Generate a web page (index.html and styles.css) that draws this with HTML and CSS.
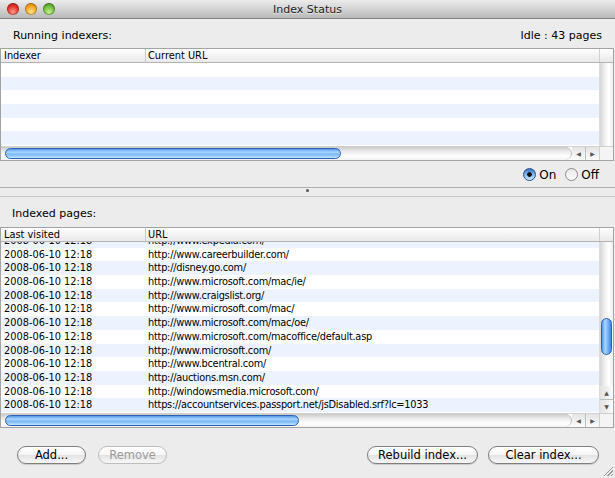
FILE: index.html
```html
<!DOCTYPE html>
<html lang="en">
<head>
  <meta charset="UTF-8" />
  <title>Index Status</title>
  <link rel="stylesheet" href="styles.css">
</head>
<body>
  <div class="window">
    <div class="titlebar">
      <div class="lights">
        <span class="light red"></span>
        <span class="light amber"></span>
        <span class="light green"></span>
      </div>
      <div class="title">Index Status</div>
    </div>

    <div class="label-row">
      <span>Running indexers:</span>
      <span>Idle : 43 pages</span>
    </div>

    <div class="table">
      <div class="thead">
        <div class="col-a">Indexer</div>
        <div class="col-b">Current URL</div>
        <div class="col-end"></div>
      </div>
      <div class="tbody top-body">
        <div class="rows">
          <div class="row"></div>
          <div class="row"></div>
          <div class="row"></div>
          <div class="row"></div>
          <div class="row"></div>
          <div class="row"></div>
        </div>
        <div class="vscroll empty"></div>
      </div>
      <div class="hscroll">
        <div class="htrack"><div class="hthumb thumb-top"></div></div>
        <div class="arrows">
          <span class="arrow">&#9664;</span><span class="arrow">&#9654;</span>
        </div>
        <div class="corner"></div>
      </div>
    </div>

    <div class="radio-row">
      <label class="radio-item"><span class="radio on"></span>On</label>
      <label class="radio-item"><span class="radio"></span>Off</label>
    </div>

    <div class="splitter"><span class="dimple"></span></div>

    <div class="label-row second">
      <span>Indexed pages:</span>
    </div>

    <div class="table">
      <div class="thead">
        <div class="col-a">Last visited</div>
        <div class="col-b">URL</div>
        <div class="col-end"></div>
      </div>
      <div class="tbody bottom-body">
        <div class="rows">
          <div class="scrolled">
            <div class="row"><span class="col-a">2008-06-10 12:18</span><span class="col-b">http://www.expedia.com/</span></div>
            <div class="row"><span class="col-a">2008-06-10 12:18</span><span class="col-b">http://www.careerbuilder.com/</span></div>
            <div class="row"><span class="col-a">2008-06-10 12:18</span><span class="col-b">http://disney.go.com/</span></div>
            <div class="row"><span class="col-a">2008-06-10 12:18</span><span class="col-b">http://www.microsoft.com/mac/ie/</span></div>
            <div class="row"><span class="col-a">2008-06-10 12:18</span><span class="col-b">http://www.craigslist.org/</span></div>
            <div class="row"><span class="col-a">2008-06-10 12:18</span><span class="col-b">http://www.microsoft.com/mac/</span></div>
            <div class="row"><span class="col-a">2008-06-10 12:18</span><span class="col-b">http://www.microsoft.com/mac/oe/</span></div>
            <div class="row"><span class="col-a">2008-06-10 12:18</span><span class="col-b">http://www.microsoft.com/macoffice/default.asp</span></div>
            <div class="row"><span class="col-a">2008-06-10 12:18</span><span class="col-b">http://www.microsoft.com/</span></div>
            <div class="row"><span class="col-a">2008-06-10 12:18</span><span class="col-b">http://www.bcentral.com/</span></div>
            <div class="row"><span class="col-a">2008-06-10 12:18</span><span class="col-b">http://auctions.msn.com/</span></div>
            <div class="row"><span class="col-a">2008-06-10 12:18</span><span class="col-b">http://windowsmedia.microsoft.com/</span></div>
            <div class="row"><span class="col-a">2008-06-10 12:18</span><span class="col-b">https://accountservices.passport.net/jsDisabled.srf?lc=1033</span></div>
            <div class="row"><span class="col-a">2008-06-10 12:18</span><span class="col-b">http://www.msn.com/</span></div>
          </div>
        </div>
        <div class="vscroll">
          <div class="vtrack"><div class="vthumb"></div></div>
          <div class="varrows">
            <span class="arrow">&#9650;</span><span class="arrow">&#9660;</span>
          </div>
        </div>
      </div>
      <div class="hscroll">
        <div class="htrack"><div class="hthumb thumb-bottom"></div></div>
        <div class="arrows">
          <span class="arrow">&#9664;</span><span class="arrow">&#9654;</span>
        </div>
        <div class="corner"></div>
      </div>
    </div>

    <div class="buttons">
      <div class="group">
        <button class="btn small">Add...</button>
        <button class="btn small" disabled>Remove</button>
      </div>
      <div class="group">
        <button class="btn wide">Rebuild index...</button>
        <button class="btn wide">Clear index...</button>
      </div>
    </div>

    <div class="grip"></div>
  </div>
</body>
</html>
```

FILE: styles.css
```css
body {
  margin: 0;
  background: #ececec;
  font-family: "DejaVu Sans", "Liberation Sans", sans-serif;
  color: #000;
}
.window {
  position: relative;
  width: 615px;
  height: 478px;
  display: flex;
  flex-direction: column;
  background: #ececec;
  overflow: hidden;
}

/* title bar */
.titlebar {
  height: 18px;
  border-bottom: 1px solid #858585;
  background: linear-gradient(#ececec, #d3d3d3 50%, #b9b9b9);
  display: flex;
  align-items: center;
  position: relative;
}
.lights {
  display: flex;
  gap: 6px;
  padding-left: 7px;
}
.light {
  width: 12px;
  height: 12px;
  border-radius: 50%;
  box-shadow: inset 0 0 0 1px rgba(0,0,0,0.25);
}
.light.red { background: radial-gradient(circle at 50% 75%, #ff9a8a, #e0322a 55%, #a8150f); }
.light.amber { background: radial-gradient(circle at 50% 75%, #ffe28a, #f2a21d 55%, #b8700a); }
.light.green { background: radial-gradient(circle at 50% 75%, #c6f08e, #6cb83a 55%, #3b7d17); }
.title {
  position: absolute;
  left: 0;
  right: 0;
  text-align: center;
  font-size: 11px;
  color: #222;
  text-shadow: 0 1px 0 rgba(255,255,255,0.6);
}

/* section labels */
.label-row {
  height: 29px;
  box-sizing: border-box;
  padding: 9px 13px 0 13px;
  display: flex;
  justify-content: space-between;
  font-size: 11px;
  line-height: 16px;
}
.label-row.second {
  height: 30px;
  padding-left: 12px;
}

/* tables */
.table {
  margin-right: 1px;
  border: 1px solid #a3a3a3;
  background: #fff;
  display: flex;
  flex-direction: column;
  font-size: 9.8px;
}
.thead {
  height: 13px;
  display: flex;
  border-bottom: 1px solid #b4b4b4;
  background: linear-gradient(#ffffff, #f3f3f3 50%, #e9e9e9);
  line-height: 13px;
}
.thead .col-a {
  width: 141px;
  padding-left: 3px;
  border-right: 1px solid #c8c8c8;
}
.thead .col-b {
  flex: 1;
  padding-left: 2px;
  border-right: 1px solid #d0d0d0;
}
.thead .col-end {
  width: 13px;
}
.tbody {
  display: flex;
}
.top-body { height: 83px; }
.bottom-body { height: 171px; }
.rows {
  flex: 1;
  overflow: hidden;
}
.scrolled {
  margin-top: -8px;
}
.row {
  height: 13.7px;
  line-height: 13.7px;
  display: flex;
  white-space: nowrap;
}
.top-body .row:nth-child(odd) { background: #fff; }
.top-body .row:nth-child(even) { background: #edf3fe; }
.bottom-body .row:nth-child(odd) { background: #edf3fe; }
.bottom-body .row:nth-child(even) { background: #fff; }
.row .col-a {
  width: 141px;
  padding-left: 3px;
  flex: none;
}
.row .col-b {
  padding-left: 3px;
  letter-spacing: -0.25px;
}

/* scrollbars */
.vscroll {
  width: 13px;
  display: flex;
  flex-direction: column;
  background: linear-gradient(to right, #d6d6d6, #f2f2f2 40%, #ffffff 70%, #eeeeee);
  border-left: 1px solid #dcdcdc;
}
.vtrack {
  flex: 1;
  border-radius: 6px 6px 0 0;
  padding-top: 76px;
  box-sizing: border-box;
}
.vthumb {
  margin: 0 1px;
  height: 37px;
  border-radius: 6px;
  border: 1px solid #2d62b4;
  box-sizing: border-box;
  background: linear-gradient(to right, #4f94e6, #a9d6ff 35%, #7fbaf4 60%, #3c86e0);
}
.varrows {
  height: 27px;
  display: flex;
  flex-direction: column;
}
.arrow {
  flex: 1;
  display: flex;
  align-items: center;
  justify-content: center;
  font-size: 6px;
  color: #555;
  background: linear-gradient(to right, #e2e2e2, #fbfbfb);
  border: 0 solid #bdbdbd;
}
.varrows .arrow + .arrow { border-top-width: 1px; }
.hscroll {
  height: 13px;
  display: flex;
  border-top: 1px solid #d0d0d0;
}
.htrack {
  flex: 1;
  padding: 1px 0 0 4px;
  border-radius: 0 7px 7px 0;
  border-right: 1px solid #b8b8b8;
  background: linear-gradient(#cacaca, #ececec 35%, #ffffff 70%, #f2f2f2);
  box-sizing: border-box;
}
.hthumb {
  height: 11px;
  border-radius: 6px;
  border: 1px solid #2d62b4;
  box-sizing: border-box;
  background: linear-gradient(#5598e8, #a9d6ff 35%, #7cb8f4 60%, #bfe4ff);
}
.thumb-top { width: 336px; }
.thumb-bottom { width: 294px; }
.arrows {
  width: 27px;
  display: flex;
}
.arrows .arrow {
  background: linear-gradient(#e4e4e4, #fcfcfc);
}
.arrows .arrow + .arrow { border-left-width: 1px; }
.corner {
  width: 13px;
  background: #f4f4f4;
  border-left: 1px solid #d0d0d0;
}

/* radios */
.radio-row {
  height: 26px;
  display: flex;
  justify-content: flex-end;
  align-items: center;
  gap: 9px;
  padding-right: 16px;
  padding-top: 1px;
  box-sizing: border-box;
  font-size: 12px;
}
.radio-item {
  display: flex;
  align-items: center;
  gap: 3px;
}
.radio {
  width: 13px;
  height: 13px;
  box-sizing: border-box;
  border-radius: 50%;
  border: 1px solid #8a8a8a;
  background: linear-gradient(#e8e8e8, #ffffff);
}
.radio.on {
  border-color: #284f8f;
  background: radial-gradient(circle, #111 0 2px, transparent 2.6px), linear-gradient(#3b73c8, #8cc3f6 60%, #cfeaff);
}

/* splitter */
.splitter {
  height: 10px;
  box-sizing: border-box;
  border-top: 1px solid #b0b0b0;
  border-bottom: 1px solid #c4c4c4;
  display: flex;
  justify-content: center;
}
.dimple {
  width: 3px;
  height: 3px;
  margin-top: 1px;
  border-radius: 50%;
  background: #555;
}

/* buttons */
.buttons {
  flex: 1;
  display: flex;
  justify-content: space-between;
  align-items: flex-start;
  padding: 18px 16px 0 17px;
}
.group {
  display: flex;
  gap: 10px;
}
.group:first-child { gap: 12px; }
.btn {
  height: 18px;
  padding: 0;
  border: 1px solid #7e7e7e;
  border-radius: 9px;
  background: linear-gradient(#ffffff, #f6f6f6 50%, #e3e3e3 52%, #f7f7f7);
  font-family: "DejaVu Sans", "Liberation Sans", sans-serif;
  font-size: 11.5px;
  color: #000;
  box-shadow: 0 1px 1px rgba(0,0,0,0.15);
}
.btn.small { width: 69px; }
.btn.wide { width: 111px; }
.btn:disabled {
  color: #9a9a9a;
  border-color: #bdbdbd;
  box-shadow: none;
}
.grip {
  position: absolute;
  right: 2px;
  bottom: 2px;
  width: 9px;
  height: 9px;
  background: linear-gradient(135deg, transparent 45%, #999 45% 52%, transparent 52% 66%, #999 66% 73%, transparent 73% 86%, #999 86% 93%, transparent 93%);
}
```
